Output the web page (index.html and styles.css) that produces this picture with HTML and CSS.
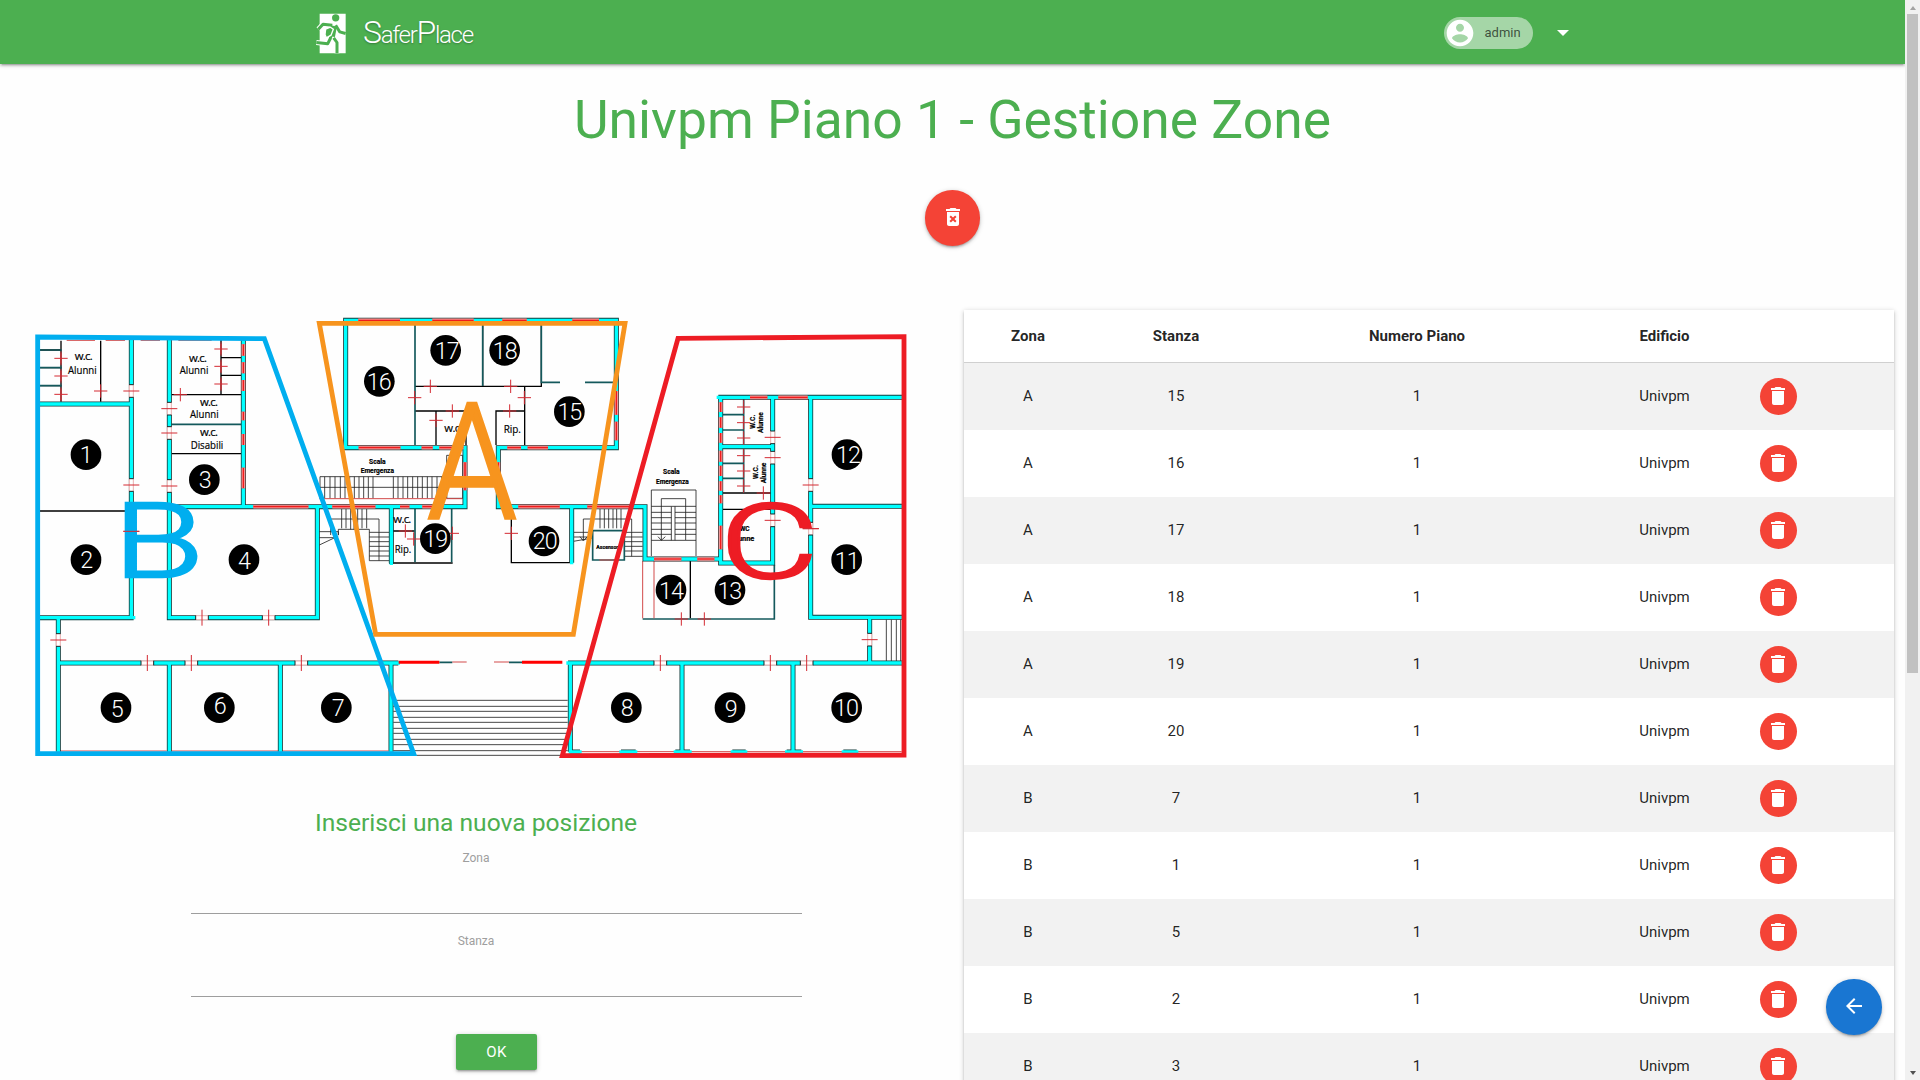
FILE: index.html
```html
<!DOCTYPE html>
<html lang="it">
<head>
<meta charset="utf-8">
<title>SaferPlace - Gestione Zone</title>
<link rel="stylesheet" href="styles.css">
</head>
<body>
<svg class="defs" aria-hidden="true">
  <symbol id="trash" viewBox="0 0 24 24"><path d="M6 19c0 1.100.9 2 2 2h8c1.100 0 2-.9 2-2V7H6v12zM19 4h-3.500l-1-1h-5l-1 1H5v2h14V4z"/></symbol>
  <symbol id="trash-x" viewBox="0 0 24 24"><path d="M6 19c0 1.100.9 2 2 2h8c1.100 0 2-.9 2-2V7H6v12zm2.460-7.120l1.410-1.410L12 12.590l2.120-2.120 1.410 1.410L13.410 14l2.120 2.120-1.410 1.410L12 15.410l-2.120 2.120-1.410-1.410L10.590 14l-2.130-2.120zM15.500 4l-1-1h-5l-1 1H5v2h14V4z"/></symbol>
</svg>
<div class="page">
  <header class="nav">
    <div class="brand">
      <svg class="brand-icon" viewBox="0 0 93 122">
        <path fill="#fff" d="M14 2H92V120H14z"/>
        <circle class="man" cx="62" cy="14" r="11"/>
        <g class="man-edge"><path d="M52 36L24 33 10 48M54 42L46 76 38 92 4 88M56 74L66 88V120"/></g>
        <g class="man-line"><path d="M52 36L24 33 10 48M54 42L46 76 38 92 4 88M56 74L66 88V120M62 36L74 56 92 61"/><path class="torso" d="M56 38L50 70"/></g>
        <path class="bag" d="M32 48l14-6 9 6-7 18-14 8-4-10z"/>
      </svg>
      <span class="brand-name"><b>S</b>afer<b>P</b>lace</span>
    </div>
    <div class="user">
      <div class="chip">
        <svg viewBox="0 0 24 24"><path d="M12 2C6.480 2 2 6.480 2 12s4.480 10 10 10 10-4.480 10-10S17.520 2 12 2zm0 3c1.660 0 3 1.340 3 3s-1.340 3-3 3-3-1.340-3-3 1.340-3 3-3zm0 14.200c-2.500 0-4.710-1.280-6-3.220.03-1.990 4-3.080 6-3.080 1.990 0 5.970 1.090 6 3.080-1.290 1.940-3.500 3.220-6 3.220z"/></svg>
        <span>admin</span>
      </div>
      <i class="caret"></i>
    </div>
  </header>

  <h2>Univpm Piano 1 - Gestione Zone</h2>
  <div class="actions"><button class="fab red"><svg><use href="#trash-x"/></svg></button></div>

  <main class="columns">
    <section class="left">
      <svg class="plan" viewBox="0 0 2700 1380">
        <defs>
          <path id="walls" d="M56 282H334M334 88V923M56 923H341M448 88V923H892V590M670 88V590M448 590H1335V413H977V31H1789V413H1435V590H1875V747H2102M115 923V1325M115 1059H1135M448 1059V1325M781 1059V1325M1113 1059V1325M1114 590V760M1655 590V758M2102 262V759H2258V262M2095 262H2650M2102 410H2258M2372 262V922H2650M2372 589H2650M2549 922V1059M1644 1059H2650M1651 1059V1325M1986 1059V1325M2319 1059V1325M1651 1326H1680M1803 1326H1847M1966 1326H2010M2137 1326H2177M2300 1326H2344M2470 1326H2510"/>
          <path id="windows" d="M1015 31H1140M1237 31H1361M1447 31H1520M1657 31H1737M1016 413H1141M1205 413H1238M1258 413H1330M1462 413H1503M1523 413H1584M700 590H865M937 590H1066M1140 590H1168M1207 590H1270M1495 590H1619M1702 590H1828M1902 747H1984M2032 747H2083M2190 262H2242M2275 262H2363M670 103V137M670 157V190M670 210V243M670 305V331M670 372V405M670 473V535M1335 457V541M1435 457V541M1789 243V314M1789 335V391M2102 277V306M2102 322V353M2102 369V398M2102 422V455M2102 467V498M2102 514V542M2102 556V580M2102 647V718"/>
          <g id="c"><path class="cross" d="M-20 0H20M0-20V20"/></g>
          <g id="dv"><path class="gap" d="M-8-19H8V19H-8z"/><path class="jamb" d="M-6-18V18M6-18V18"/><path class="lintel" d="M-7-19H7M-7 19H7"/><path class="cross" d="M-24 0H24"/></g>
          <g id="dh"><path class="gap" d="M-19-8H19V8H-19z"/><path class="jamb" d="M-18-6H18M-18 6H18"/><path class="lintel" d="M-19-7V7M19-7V7"/><path class="cross" d="M0-24V24"/></g>
        </defs>

        <g class="stairs">
          <path d="M1120 1171H1643M1120 1189H1643M1120 1204H1643M1120 1222H1643M1120 1237H1643M1120 1255H1643M1120 1270H1643M1120 1288H1643M1120 1304H1643M1120 1322H1643M1120 1336H1643"/>
          <path d="M900 500H1280V565M900 532H1280M900 500V565M914 500V565M930 500V565M945 500V565M961 500V565M975 500V565M989 500V565M1003 500V565M1017 500V565M1031 500V565M1045 500V565M1059 500V565M1120 500V565M1134 500V565M1149 500V565M1163 500V565M1178 500V565M1193 500V565M1207 500V565M1222 500V565M1236 500V565M1251 500V565M1265 500V565M1280 436H1328V565H1280z"/>
          <path d="M932 675V627H1077V665M965 597V655M978 597V655M992 597V658M1002 597V658M1013 597V658M1026 597V655M1040 597V655M955 675V658H1048V752H1107M898 665H955V675M898 683H945M898 705L955 678M1048 667H1107M1048 681H1107M1048 695H1107M1048 709H1107M1048 723H1107M1048 738H1107M1077 665V752"/>
          <path d="M1690 690V627H1835V665M1740 597V655M1753 597V655M1766 597V655M1779 597V655M1790 597V655M1803 597V655M1660 667H1718M1660 681H1718M1660 694L1718 684M1680 680l10 13 12-13M1813 667H1868M1813 681H1868M1813 695H1868M1813 709H1868M1813 723H1868M1813 739H1868M1835 665V739"/>
          <path d="M1894 738V540H2028V738M1924 690V566H1997V690M1894 589H1954V691M1965 691V589H2028M1954 589H1965M1894 607H1954M1894 623H1954M1894 639H1954M1894 658H1954M1894 673H1954M1894 691H2028M1965 607H2028M1965 623H2028M1965 639H2028M1965 658H2028M1965 673H2028M1914 680l10 11 12-11"/>
          <path d="M2599 929V1053M2614 929V1053M2629 929V1053M2642 929V1053"/>
        </g>

        <g class="thin">
          <path d="M60 120H125M60 173H125M60 227H125M123 92V275M242 92V275M60 603H334M603 90V252M603 143H664M603 196H664M455 254H664M455 431H664"/>
          <path d="M1388 45V228M1564 45V230M1185 229H1565M1514 230V405M1185 303H1340M1248 303V405M1338 303V405M1514 303H1428V405M1298 759H1107M1474 590V758H1655M1119 663H1184"/>
          <path d="M2011 750V925M2107 549H2252M2107 598H2252"/>
        </g>
        <g class="teal">
          <path d="M455 343H664M1185 45V405M1388 45V228M1564 45V217H1620M1695 217H1782M1185 597V757M1295 597V757M1718 662H1813V750H1718zM1868 927H2263V765M2107 314H2173M2107 360H2173M2107 460H2173M2107 505H2173M2171 268V403M2171 418V547M60 120H125M60 173H125M60 227H125M1258 1057H1297M1467 1057H1506"/>
        </g>
        <path class="redline" d="M123 130V160M123 183V213M123 238V270M603 102V132M603 155V185M603 208V238M1297 1056H1340M1422 1056H1467M1868 753V925M1902 753V925M898 566H1328M1738 750H1790M120 1323H440M455 1323H775M788 1323H1105M1680 1325H1966M2010 1325H2300M2344 1325H2645M140 91H225M257 91H315M362 91H420M475 91H575"/>
        <use href="#walls" class="wall-edge"/><use href="#walls" class="wall"/>
        <use href="#windows" class="win-edge"/><use href="#windows" class="win"/><use href="#windows" class="win-core"/>
        <path class="redbar" d="M1136 1057H1258M1506 1057H1627"/>

        <g>
          <use href="#dv" x="334" y="243"/><use href="#dv" x="334" y="525"/><use href="#dv" x="448" y="296"/><use href="#dv" x="448" y="369"/><use href="#dv" x="448" y="528"/><use href="#dv" x="115" y="990"/><use href="#dv" x="2258" y="382"/><use href="#dv" x="2258" y="443"/><use href="#dv" x="2258" y="631"/><use href="#dv" x="2372" y="525"/><use href="#dv" x="2372" y="656"/><use href="#dv" x="2549" y="989"/><use href="#dv" x="334" y="664"/>
          <use href="#dh" x="546" y="923"/><use href="#dh" x="746" y="923"/><use href="#dh" x="382" y="1059"/><use href="#dh" x="514" y="1059"/><use href="#dh" x="844" y="1059"/><use href="#dh" x="1921" y="1059"/><use href="#dh" x="2251" y="1059"/><use href="#dh" x="2360" y="1059"/>
          <use href="#c" x="1984" y="927"/><use href="#c" x="2053" y="927"/><use href="#c" x="123" y="145"/><use href="#c" x="123" y="198"/><use href="#c" x="123" y="253"/><use href="#c" x="242" y="243"/><use href="#c" x="603" y="117"/><use href="#c" x="603" y="169"/><use href="#c" x="603" y="222"/><use href="#c" x="481" y="254"/>
          <use href="#c" x="1231" y="229"/><use href="#c" x="1472" y="229"/><use href="#c" x="1184" y="263"/><use href="#c" x="1513" y="263"/><use href="#c" x="1297" y="303"/><use href="#c" x="1469" y="303"/><use href="#c" x="1248" y="331"/><use href="#c" x="1297" y="670"/><use href="#c" x="1474" y="670"/><use href="#c" x="1156" y="663"/><use href="#c" x="1181" y="687"/>
          <use href="#c" x="2171" y="291"/><use href="#c" x="2171" y="338"/><use href="#c" x="2171" y="384"/><use href="#c" x="2171" y="437"/><use href="#c" x="2171" y="483"/><use href="#c" x="2171" y="528"/><use href="#c" x="2230" y="549"/>
        </g>

        <g class="label">
          <text x="191" y="150" textLength="54">w.c.</text><text x="187" y="192" textLength="86" lengthAdjust="spacingAndGlyphs">Alunni</text>
          <text x="534" y="155" textLength="54">w.c.</text><text x="522" y="192" textLength="86" lengthAdjust="spacingAndGlyphs">Alunni</text>
          <text x="567" y="287" textLength="54">w.c.</text><text x="553" y="323" textLength="86" lengthAdjust="spacingAndGlyphs">Alunni</text>
          <text x="567" y="378" textLength="54">w.c.</text><text x="561" y="416" textLength="98" lengthAdjust="spacingAndGlyphs">Disabili</text>
          <text x="1300" y="366" textLength="54">w.c.</text><text x="1477" y="368" textLength="52" lengthAdjust="spacingAndGlyphs">Rip.</text>
          <text x="1147" y="639" textLength="54">w.c.</text><text x="1149" y="730" textLength="50" lengthAdjust="spacingAndGlyphs">Rip.</text>
        </g>
        <g class="label small">
          <text x="1072" y="461" textLength="50" lengthAdjust="spacingAndGlyphs">Scala</text><text x="1072" y="489" textLength="100" lengthAdjust="spacingAndGlyphs">Emergenza</text>
          <text x="1954" y="493" textLength="50" lengthAdjust="spacingAndGlyphs">Scala</text><text x="1957" y="521" textLength="98" lengthAdjust="spacingAndGlyphs">Emergenza</text>
          <text x="2174" y="664" textLength="30" lengthAdjust="spacingAndGlyphs">WC</text><text x="2168" y="692" textLength="70" lengthAdjust="spacingAndGlyphs">Alunne</text>
          <g class="side">
            <text transform="translate(2204 335) rotate(-90)" textLength="42">W.C.</text><text transform="translate(2229 338) rotate(-90)" textLength="62" lengthAdjust="spacingAndGlyphs">Alunne</text>
            <text transform="translate(2213 486) rotate(-90)" textLength="42">W.C.</text><text transform="translate(2238 489) rotate(-90)" textLength="62" lengthAdjust="spacingAndGlyphs">Alunne</text>
          </g>
          <text class="tiny" x="1766" y="718" textLength="74" lengthAdjust="spacingAndGlyphs">Ascensore</text>
        </g>

        <g class="dots">
          <circle cx="198" cy="434" r="46"/><circle cx="198" cy="749" r="46"/><circle cx="553" cy="509" r="46"/><circle cx="672" cy="749" r="46"/><circle cx="288" cy="1193" r="46"/><circle cx="598" cy="1193" r="46"/><circle cx="949" cy="1193" r="46"/><circle cx="1819" cy="1193" r="46"/><circle cx="2130" cy="1193" r="46"/><circle cx="2480" cy="1193" r="46"/><circle cx="2480" cy="749" r="46"/><circle cx="2481" cy="434" r="46"/><circle cx="2130" cy="840" r="46"/><circle cx="1953" cy="840" r="46"/><circle cx="1648" cy="305" r="46"/><circle cx="1078" cy="214" r="46"/><circle cx="1277" cy="121" r="46"/><circle cx="1454" cy="121" r="46"/><circle cx="1246" cy="686" r="46"/><circle cx="1572" cy="693" r="46"/>
        </g>
        <g class="num">
          <text x="197" y="459">1</text><text x="199" y="773">2</text><text x="554" y="534">3</text><text x="672" y="776">4</text><text x="290" y="1220">5</text><text x="599" y="1213">6</text><text x="953" y="1217">7</text><text x="1820" y="1219">8</text><text x="2132" y="1221">9</text><text x="2478" y="1219">10</text><text x="2480" y="776">11</text><text x="2484" y="460">12</text><text x="2128" y="866">13</text><text x="1953" y="866">14</text><text x="1648" y="329">15</text><text x="1076" y="239">16</text><text x="1280" y="147">17</text><text x="1454" y="147">18</text><text x="1246" y="711">19</text><text x="1574" y="718">20</text>
        </g>

        <path class="zone blue" d="M53 81L733 86 1181 1331H53z"/>
        <path class="zone orange" d="M898 40H1815L1660 973H1067z"/>
        <path class="zone crimson" d="M1974 85L2652 80V1335L1627 1337z"/>
        <text class="letter fb" transform="translate(415 801) scale(1.430 1)" font-size="311">B</text>
        <text class="letter fo" transform="translate(1356 623) scale(.890 1)" font-size="482">A</text>
        <text class="letter fc" transform="translate(2248 803) scale(1.460 1)" font-size="313">C</text>
        <path class="door-over" d="M2348 656H2397M310 664H358"/>
      </svg>

      <h5>Inserisci una nuova posizione</h5>
      <form class="form">
        <label>Zona</label><div class="field"></div>
        <label>Stanza</label><div class="field"></div>
        <button type="button" class="btn">OK</button>
      </form>
    </section>

    <section class="card">
      <table>
        <colgroup><col class="c1"><col class="c2"><col class="c3"><col class="c4"><col></colgroup>
        <thead><tr><th>Zona</th><th>Stanza</th><th>Numero Piano</th><th>Edificio</th><th></th></tr></thead>
        <tbody>
          <tr><td>A</td><td>15</td><td>1</td><td>Univpm</td><td><button class="del"><svg><use href="#trash"/></svg></button></td></tr>
          <tr><td>A</td><td>16</td><td>1</td><td>Univpm</td><td><button class="del"><svg><use href="#trash"/></svg></button></td></tr>
          <tr><td>A</td><td>17</td><td>1</td><td>Univpm</td><td><button class="del"><svg><use href="#trash"/></svg></button></td></tr>
          <tr><td>A</td><td>18</td><td>1</td><td>Univpm</td><td><button class="del"><svg><use href="#trash"/></svg></button></td></tr>
          <tr><td>A</td><td>19</td><td>1</td><td>Univpm</td><td><button class="del"><svg><use href="#trash"/></svg></button></td></tr>
          <tr><td>A</td><td>20</td><td>1</td><td>Univpm</td><td><button class="del"><svg><use href="#trash"/></svg></button></td></tr>
          <tr><td>B</td><td>7</td><td>1</td><td>Univpm</td><td><button class="del"><svg><use href="#trash"/></svg></button></td></tr>
          <tr><td>B</td><td>1</td><td>1</td><td>Univpm</td><td><button class="del"><svg><use href="#trash"/></svg></button></td></tr>
          <tr><td>B</td><td>5</td><td>1</td><td>Univpm</td><td><button class="del"><svg><use href="#trash"/></svg></button></td></tr>
          <tr><td>B</td><td>2</td><td>1</td><td>Univpm</td><td><button class="del"><svg><use href="#trash"/></svg></button></td></tr>
          <tr><td>B</td><td>3</td><td>1</td><td>Univpm</td><td><button class="del"><svg><use href="#trash"/></svg></button></td></tr>
        </tbody>
      </table>
    </section>
  </main>
</div>
<button class="fab back"><svg viewBox="0 0 24 24"><path d="M20 11H7.830l5.590-5.590L12 4l-8 8 8 8 1.410-1.410L7.830 13H20v-2z"/></svg></button>
<div class="scrollbar"><i class="up"></i><i class="thumb"></i><i class="down"></i></div>
</body>
</html>
```
FILE: styles.css
```css
* { box-sizing: border-box; }
html { font-size: 15px; overflow: hidden; }
body { margin: 0; height: 1080px; overflow: hidden; display: flex; background: #fff; color: rgba(0,0,0,.87); font-family: Roboto, sans-serif; line-height: 1.5; }
button { border: 0; padding: 0; font-family: inherit; }
.defs { display: none; }
.page { width: 1905px; height: 1080px; overflow: hidden; background: #fefefe; }

.nav { height: 64px; background: #4caf50; display: flex; justify-content: space-between; padding: 0 336px 0 315px; box-shadow: 0 2px 2px 0 rgba(0,0,0,.14), 0 3px 1px -2px rgba(0,0,0,.12), 0 1px 5px 0 rgba(0,0,0,.2); }
.brand { display: flex; align-items: center; gap: 17px; padding-top: 2px; }
.brand-icon { width: 31px; height: 41px; }
.man { fill: #4caf50; }
.man-edge, .man-line { fill: none; stroke-linejoin: round; }
.man-edge { stroke: #fff; stroke-width: 15; }
.man-line { stroke: #4caf50; stroke-width: 9; }
.torso { stroke-width: 20; }
.bag { fill: #4caf50; stroke: #fff; stroke-width: 4; }
.brand-name { font-size: 24px; font-weight: 300; letter-spacing: -1.3px; line-height: 40px; color: #fff; text-shadow: 0 1px 2px rgba(0,0,0,.3); }
.brand-name b { font-size: 32px; font-weight: 300; }
.user { display: flex; align-items: center; gap: 23px; padding-top: 2px; }
.chip { width: 89px; height: 32px; margin-right: 1px; border-radius: 16px; background: #a5d6a7; display: flex; align-items: center; gap: 8.5px; font-size: 13px; font-weight: 400; color: rgba(0,0,0,.65); }
.chip svg { width: 32px; height: 32px; fill: #fff; }
.caret { border: 6.5px solid transparent; border-top-color: #fff; border-bottom: 0; }

h2 { margin: 27px 0 0; font-size: 3.56rem; font-weight: 400; line-height: 1.1; color: #4caf50; text-align: center; }
.actions { display: flex; justify-content: center; margin-top: 40.3px; }
.fab { width: 55.5px; height: 55.5px; border-radius: 50%; display: grid; place-items: center; fill: #fff; box-shadow: 0 2px 2px 0 rgba(0,0,0,.14), 0 3px 1px -2px rgba(0,0,0,.12), 0 1px 5px 0 rgba(0,0,0,.2); }
.fab svg { width: 24px; height: 24px; margin-bottom: 1px; }
.red { background: #f44336; }
.back { position: fixed; left: 1826px; top: 979px; background: #1976d2; }

.columns { display: flex; margin-top: 64.2px; }
.left { width: 964px; padding-left: 20px; }
.plan { display: block; width: 900px; height: 460px; }
h5 { margin: 39px 0 0; width: 912px; font-size: 1.64rem; font-weight: 400; line-height: 1.1; color: #4caf50; text-align: center; }
.form { margin-left: 171px; width: 611px; display: flex; flex-direction: column; }
.form label { margin: 13px 41px 0 0; height: 18px; line-height: 18px; font-size: 12px; color: #9e9e9e; text-align: center; }
.field { height: 47px; border-bottom: 1px solid #9e9e9e; }
.field + label { margin-top: 18px; }
.btn { align-self: center; width: 81px; height: 36px; margin-top: 37px; border-radius: 2px; background: #4caf50; color: #fff; font-size: 15px; letter-spacing: .5px; box-shadow: 0 2px 2px 0 rgba(0,0,0,.14), 0 3px 1px -2px rgba(0,0,0,.12), 0 1px 5px 0 rgba(0,0,0,.2); }

.card { width: 930px; background: #fff; box-shadow: 0 2px 2px 0 rgba(0,0,0,.14), 0 3px 1px -2px rgba(0,0,0,.12), 0 1px 5px 0 rgba(0,0,0,.2); }
table { width: 100%; table-layout: fixed; border-collapse: collapse; font-size: 15px; }
.c1 { width: 128px; } .c2 { width: 168px; } .c3 { width: 314px; } .c4 { width: 181px; }
th { height: 53px; padding: 0; font-weight: 700; }
thead { border-bottom: 1px solid #d0d0d0; }
td { height: 67px; padding: 0; text-align: center; }
tbody tr:nth-child(odd) { background: #f2f2f2; }
td:last-child { text-align: left; padding-left: 5px; }
.del { display: grid; place-items: center; width: 37px; height: 37px; border-radius: 50%; background: #f44336; fill: #fff; }
.del svg { width: 24px; height: 24px; margin-right: 1px; }

.scrollbar { width: 15px; height: 1080px; background: #f1f1f1; display: flex; flex-direction: column; align-items: center; }
.scrollbar i { flex: none; }
.up { margin-top: 6px; border: 3.5px solid transparent; border-bottom: 4px solid #a3a3a3; border-top: 0; }
.thumb { margin-top: 4px; width: 11px; height: 659px; background: #c1c1c1; }
.down { margin: auto 0 5px; border: 3.5px solid transparent; border-top: 4px solid #505050; border-bottom: 0; }

/* floor plan */
.plan path { fill: none; }
.stairs { stroke: #222; stroke-width: 2.500; }
.thin { stroke: #000; stroke-width: 4; }
.teal { stroke: #14595c; stroke-width: 5; }
.redline { stroke: #d24a4a; stroke-width: 3; }
.redbar { stroke: #f00; stroke-width: 9; }
.wall-edge { stroke: #143c3c; stroke-width: 15; stroke-linecap: butt; }
.wall { stroke: #0ff; stroke-width: 10; stroke-linecap: square; }
.win-edge { stroke: #9c4848; stroke-width: 13; }
.win { stroke: #ffc4c4; stroke-width: 9; }
.win-core { stroke: #f01c1c; stroke-width: 5; }
.plan .gap { fill: #fff; }
.jamb { stroke: #d88; stroke-width: 2; }
.lintel { stroke: #222; stroke-width: 3; }
.cross, .door-over { stroke: #d42a32; stroke-width: 3; }
.label { font-family: "Open Sans", sans-serif; font-size: 34px; font-weight: 500; text-anchor: middle; stroke: #000; stroke-width: .6; }
.small { font-family: Roboto, sans-serif; font-size: 23px; font-weight: 700; }
.side { font-size: 20px; }
.tiny { font-size: 18px; }
.num { font-size: 70px; font-weight: 300; fill: #fff; text-anchor: middle; letter-spacing: -3px; }
.zone { stroke-width: 14.5; }
.blue { stroke: #00aeef; }
.orange { stroke: #f7941e; }
.crimson { stroke: #ed1c24; }
.letter { font-weight: 300; text-anchor: middle; stroke-width: 7; }
.fb { fill: #00aeef; stroke: #00aeef; }
.fo { fill: #f7941e; stroke: #f7941e; stroke-width: 10; }
.fc { fill: #ed1c24; stroke: #ed1c24; }
```
